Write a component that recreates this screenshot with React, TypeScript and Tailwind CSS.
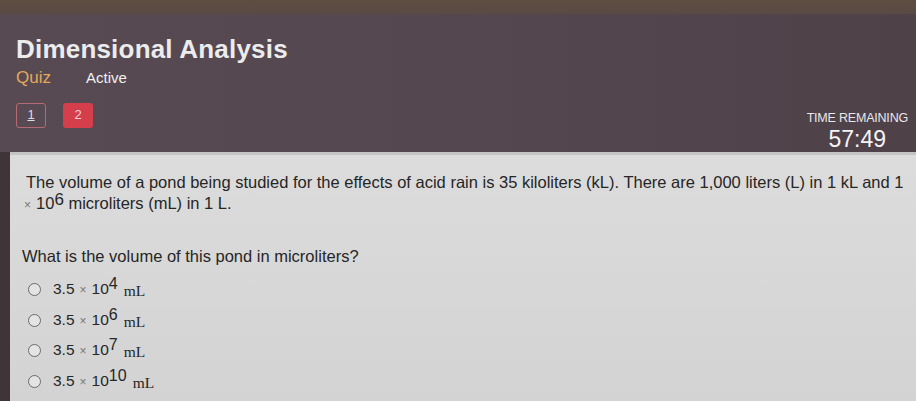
import React from "react";

const options = [
  { exp: "4" },
  { exp: "6" },
  { exp: "7" },
  { exp: "10" },
];

function Sci({ exp }: { exp: string }) {
  return (
    <span className="inline-flex items-baseline">
      <span>3.5</span>
      <span className="mx-[5px] text-[12px] text-[#777]">×</span>
      <span>10</span>
      <sup className="relative -top-[5px] text-[16px]">{exp}</sup>
      <span className="ml-[6px] font-['Liberation_Serif',serif] text-[15.5px] relative top-[2px]">mL</span>
    </span>
  );
}

export default function App() {
  return (
    <div className="w-[916px] h-[401px] overflow-hidden bg-[#3f3438] font-['Liberation_Sans',Arial,sans-serif]">
      <div className="h-[14px] bg-gradient-to-b from-[#5e4d3f] to-[#594a45]" />
      <div className="h-[138px] bg-gradient-to-r from-[#574a53] via-[#55474f] to-[#4e4148] px-[16px] pt-[20px] relative">
        <h1 className="text-[26px] leading-[30px] text-[#ececec] font-semibold tracking-[0.2px]">Dimensional Analysis</h1>
        <div className="mt-[1px] flex items-baseline gap-[35px]">
          <span className="text-[17px] text-[#e4a85a]">Quiz</span>
          <span className="text-[15px] text-[#f0f0f0]">Active</span>
        </div>
        <div className="mt-[12px] flex gap-[17px]">
          <div className="w-[30px] h-[25px] rounded-[3px] border border-[#b56a74] flex items-center justify-center text-[13px] text-[#dedede] underline">1</div>
          <div className="w-[30px] h-[25px] rounded-[3px] bg-[#d53f4c] flex items-center justify-center text-[13px] text-[#f7d0d0]">2</div>
        </div>
        <div className="absolute right-[8px] top-[97px] flex flex-col items-center">
          <span className="text-[12.5px] leading-[14px] text-[#e8e8e8] tracking-[-0.2px]">TIME REMAINING</span>
          <span className="text-[23px] leading-[28px] text-[#f4f4f4]">57:49</span>
        </div>
      </div>
      <div className="ml-[10px] h-[249px] bg-gradient-to-b from-[#dcdcdc] to-[#d3d3d3] border-t-[3px] border-[#c4c4c4] pl-[16px] pt-[17px] text-[#262626]">
        <p className="text-[16.5px] leading-[21px]">
          The volume of a pond being studied for the effects of acid rain is 35 kiloliters (kL). There are 1,000 liters (L) in 1 kL and 1
          <br />
          <span className="-ml-[2px] mr-[5px] text-[12px] text-[#777]">×</span>
          10<sup className="relative -top-[4px] text-[17px]">6</sup> microliters (mL) in 1 L.
        </p>
        <p className="mt-[30px] -ml-[4px] text-[16.5px] leading-[20px]">What is the volume of this pond in microliters?</p>
        <div className="mt-[13px] flex flex-col gap-[9.5px]">
          {options.map((o) => (
            <label key={o.exp} className="flex items-center gap-[12px] text-[15.5px] leading-[20px] pl-[2px]">
              <span className="w-[13px] h-[13px] rounded-full border-[1.5px] border-[#6a6a6a] bg-[#e4e4e4]" />
              <Sci exp={o.exp} />
            </label>
          ))}
        </div>
      </div>
    </div>
  );
}
